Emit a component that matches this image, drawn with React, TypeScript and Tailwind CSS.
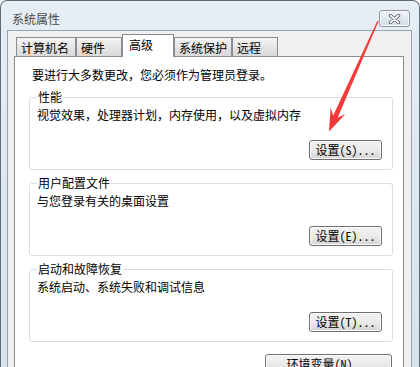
import React from 'react';

const tabs = [
  { label: '计算机名', w: 'w-[60px]' },
  { label: '硬件', w: 'w-[46px]' },
  { label: '高级', w: 'w-[52px]', active: true },
  { label: '系统保护', w: 'w-[58px]' },
  { label: '远程', w: 'w-[46px]' },
];

const groups = [
  { title: '性能', text: '视觉效果，处理器计划，内存使用，以及虚拟内存', button: '设置(S)...' },
  { title: '用户配置文件', text: '与您登录有关的桌面设置', button: '设置(E)...' },
  { title: '启动和故障恢复', text: '系统启动、系统失败和调试信息', button: '设置(T)...' },
];

function Btn({ label, className }: { label: string; className: string }) {
  return (
    <button
      className={`${className} h-[20px] rounded-[3px] border border-[#707070] bg-gradient-to-b from-[#f2f2f2] via-[#ebebeb] to-[#d4d4d4] text-[12px] leading-[14px] text-black shadow-[inset_0_0_0_1px_#fcfcfc] flex items-center justify-center`}
    >
      {label}
    </button>
  );
}

function CloseIcon() {
  return (
    <svg width="13" height="10" viewBox="0 0 13 10">
      <path d="M2.5 1.5 L10.5 8.5 M10.5 1.5 L2.5 8.5" stroke="#4f5b69" strokeWidth="3.4" strokeLinecap="round" />
      <path d="M2.5 1.5 L10.5 8.5 M10.5 1.5 L2.5 8.5" stroke="#ffffff" strokeWidth="1.7" strokeLinecap="round" />
    </svg>
  );
}

export default function App() {
  return (
    <div className="relative w-[420px] h-[367px] overflow-hidden rounded-t-[7px] border-x border-t border-[#5f6b77] bg-gradient-to-b from-[#e6edf5] to-[#d6e2ee] flex flex-col font-['Noto_Sans_Mono_CJK_SC','Noto_Sans_CJK_SC',sans-serif]">
      {/* title bar */}
      <div className="h-[29px] shrink-0 flex items-start justify-between pl-[11px] pr-[9px]">
        <span className="mt-[10px] text-[12px] leading-[15px] text-[#4a4a4a] font-['Noto_Sans_CJK_SC',sans-serif]">系统属性</span>
        <div className="mt-[9px] w-[31px] h-[17px] rounded-[3px] border border-[#8b97a4] bg-gradient-to-b from-[#f1f4f8] to-[#d3dce7] flex items-center justify-center shadow-[inset_0_0_0_1px_#f7f9fb]">
          <CloseIcon />
        </div>
      </div>

      {/* client area */}
      <div className="flex-1 ml-[6px] mr-[7px] border border-[#97a3b0] bg-[#f0f0f0] flex flex-col pt-[3px]">
        <div className="flex items-end pl-[8px]">
          {tabs.map((t) =>
            t.active ? (
              <div
                key={t.label}
                className={`${t.w} h-[23px] -mb-px relative z-10 border-x border-t border-[#898c95] bg-white pl-[6px] pt-[3px] text-[12px] leading-[14px] text-black`}
              >
                {t.label}
              </div>
            ) : (
              <div
                key={t.label}
                className={`${t.w} h-[19px] border-x border-t border-[#898c95] bg-gradient-to-b from-[#f3f3f3] to-[#d9d9d9] pl-[4px] pt-[3px] text-[12px] leading-[14px] text-black`}
              >
                {t.label}
              </div>
            )
          )}
        </div>

        <div className="flex-1 ml-[6px] mr-[7px] border border-[#898c95] bg-white flex flex-col">
          <p className="pl-[17px] pt-[11px] text-[12px] leading-[14px] text-black">要进行大多数更改，您必须作为管理员登录。</p>

          <div className="ml-[14px] mr-[10px] mt-[15px] flex flex-col gap-[13px]">
            {groups.map((g) => (
              <div key={g.title} className="h-[73px] rounded-[3px] border border-[#d5dfe5] flex flex-col">
                <span className="-mt-[8px] ml-[7px] w-fit bg-white px-[1px] text-[12px] leading-[14px] text-black">{g.title}</span>
                <span className="mt-[4px] pl-[7px] text-[12px] leading-[14px] text-black">{g.text}</span>
                <Btn label={g.button} className="self-end mr-[10px] mt-[18px] w-[73px]" />
              </div>
            ))}
            <Btn label="环境变量(N)..." className="self-end mr-[1px] -mt-[1px] w-[127px]" />
          </div>
        </div>
      </div>

      {/* red annotation arrow */}
      <svg className="absolute left-0 top-0 pointer-events-none" width="420" height="367">
        <polygon
          points="376.4,19.8 377.6,20.2 336.8,116.4 344.3,113.2 328,130.5 329.6,106.6 332.2,114.4"
          fill="#f53a3a"
        />
      </svg>
    </div>
  );
}
